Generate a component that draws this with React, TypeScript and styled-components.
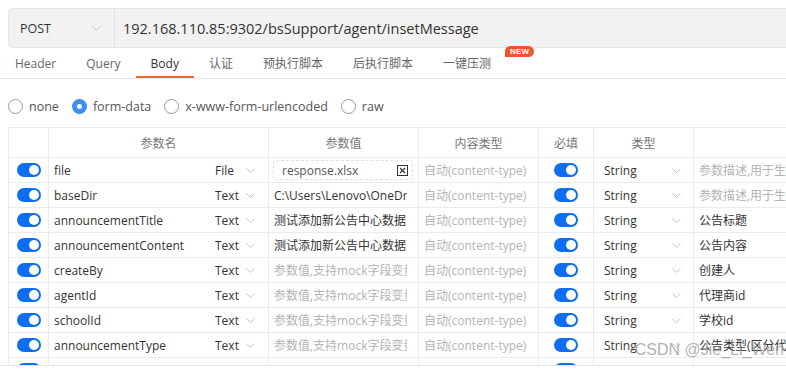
import React from 'react';
import styled, { createGlobalStyle } from 'styled-components';

const FONT = `"Open Sans", "Noto Sans CJK SC", sans-serif`;

const Global = createGlobalStyle`
  html, body { margin: 0; padding: 0; background: #fff; }
  body { font-family: ${FONT}; overflow: hidden; }
  * { box-sizing: border-box; }
`;

const Page = styled.div`
  position: relative;
  width: 786px;
  height: 370px;
  overflow: hidden;
  background: #fff;
  display: flex;
  flex-direction: column;
`;

const UrlBar = styled.div`
  margin: 8px -20px 0 8px;
  height: 40px;
  display: flex;
  align-items: center;
  background: #f2f2f2;
  border: 1px solid #e5e5e5;
  border-radius: 4px;
  flex-shrink: 0;
`;

const Method = styled.div`
  width: 106px;
  height: 100%;
  display: flex;
  align-items: center;
  justify-content: space-between;
  padding: 0 13px 0 11px;
  border-right: 1px solid #e2e2e2;
  font-size: 12.5px;
  color: #333;
`;

const UrlText = styled.div`
  padding-left: 8px;
  font-size: 14.5px;
  color: #333;
  white-space: nowrap;
`;

const Tabs = styled.div`
  height: 31px;
  display: flex;
  border-bottom: 1px solid #e8e8e8;
  flex-shrink: 0;
`;

const Tab = styled.div<{ $active?: boolean }>`
  position: relative;
  height: 30px;
  padding: 0 15px;
  display: flex;
  align-items: center;
  font-size: 12px;
  color: ${p => (p.$active ? '#333' : '#666')};
  white-space: nowrap;
  &::after {
    content: '';
    display: ${p => (p.$active ? 'block' : 'none')};
    position: absolute;
    left: 0;
    right: 0;
    bottom: 0;
    height: 2px;
    background: #f5653a;
  }
`;

const TabLabel = styled.span`
  position: relative;
`;

const NewBadge = styled.span`
  position: absolute;
  left: calc(100% + 14px);
  top: -8px;
  height: 11px;
  padding: 0 5px;
  border-radius: 6px 6px 6px 0;
  background: #f2552a;
  color: #fff;
  font-family: "Liberation Sans", sans-serif;
  font-size: 8px;
  font-weight: bold;
  line-height: 11px;
  letter-spacing: 0.2px;
`;

const RadioRow = styled.div`
  height: 48px;
  padding: 6px 0 0 8px;
  display: flex;
  align-items: center;
  gap: 13px;
  flex-shrink: 0;
`;

const RadioItem = styled.label`
  display: flex;
  align-items: center;
  gap: 6px;
  font-size: 12.5px;
  color: #555;
`;

const RadioCircle = styled.span<{ $checked?: boolean }>`
  width: 15px;
  height: 15px;
  border-radius: 50%;
  border: ${p => (p.$checked ? '5px solid #3d8ef5' : '1px solid #9a9a9a')};
  background: #fff;
`;

const Panel = styled.div`
  height: 239px;
  padding-left: 8px;
  border-bottom: 1px solid #e6e6e6;
  overflow: hidden;
  flex-shrink: 0;
`;

const Table = styled.div`
  border-left: 1px solid #ebebeb;
  border-top: 1px solid #ebebeb;
  width: 1000px;
`;

const COLS = '40px 220px 150px 120px 55px 100px 315px';

const Row = styled.div<{ $head?: boolean }>`
  display: grid;
  grid-template-columns: ${COLS};
  height: ${p => (p.$head ? '30px' : '25px')};
`;

const Cell = styled.div<{ $center?: boolean; $pad?: number }>`
  border-right: 1px solid #ebebeb;
  border-bottom: 1px solid #ebebeb;
  display: flex;
  align-items: center;
  justify-content: ${p => (p.$center ? 'center' : 'flex-start')};
  padding-left: ${p => (p.$pad ?? 0)}px;
  font-size: 12px;
  color: #333;
  white-space: nowrap;
  overflow: hidden;
`;

const HeadCell = styled(Cell)`
  justify-content: center;
  color: #777;
`;

const Name = styled.span`
  flex: 1;
  overflow: hidden;
`;

const Select = styled.div<{ $w: number; $pr: number }>`
  width: ${p => p.$w}px;
  height: 100%;
  display: flex;
  align-items: center;
  justify-content: space-between;
  padding-right: ${p => p.$pr}px;
  color: #333;
  flex-shrink: 0;
`;

const FlexFill = styled.div`
  flex: 1;
  height: 100%;
  display: flex;
  align-items: center;
  justify-content: space-between;
  padding-right: 12px;
`;

const ValueText = styled.span<{ $muted?: boolean }>`
  display: block;
  width: 133px;
  overflow: hidden;
  color: ${p => (p.$muted ? '#b3b3b3' : '#333')};
`;

const Muted = styled.span`
  color: #b3b3b3;
`;

const FileBox = styled.div`
  width: 140px;
  height: 20px;
  margin-left: -1px;
  border: 1px dashed #e0e0e0;
  border-radius: 3px;
  display: flex;
  align-items: center;
  justify-content: space-between;
  padding: 0 4px 0 8px;
  color: #555;
`;

const CloseBox = styled.span`
  width: 11px;
  height: 11px;
  border: 1px solid #333;
  display: flex;
  align-items: center;
  justify-content: center;
`;

const Toggle = styled.span`
  width: 24px;
  height: 14px;
  border-radius: 7px;
  background: #0d6ef2;
  position: relative;
  &::after {
    content: '';
    position: absolute;
    right: 2px;
    top: 2px;
    width: 10px;
    height: 10px;
    border-radius: 50%;
    background: #fff;
  }
`;

const Watermark = styled.div`
  position: absolute;
  right: 2px;
  top: 341px;
  font-family: "Liberation Sans", "Noto Sans CJK SC", sans-serif;
  font-size: 16px;
  color: rgba(150, 150, 150, 0.75);
  white-space: nowrap;
`;

const Chevron = () => (
  <svg width="9" height="5" viewBox="0 0 9 5" fill="none">
    <path d="M0.5 0.5 L4.5 4.5 L8.5 0.5" stroke="#c4c4c4" strokeWidth="1" />
  </svg>
);

const XIcon = () => (
  <svg width="7" height="7" viewBox="0 0 7 7">
    <path d="M1 1 L6 6 M6 1 L1 6" stroke="#333" strokeWidth="1.1" />
  </svg>
);

type Param = {
  name: string;
  kind: 'File' | 'Text';
  value?: string;
  file?: string;
  desc?: string;
  partial?: boolean;
};

const PARAMS: Param[] = [
  { name: 'file', kind: 'File', file: 'response.xlsx' },
  { name: 'baseDir', kind: 'Text', value: 'C:\\Users\\Lenovo\\OneDrive\\桌面' },
  { name: 'announcementTitle', kind: 'Text', value: '测试添加新公告中心数据', desc: '公告标题' },
  { name: 'announcementContent', kind: 'Text', value: '测试添加新公告中心数据', desc: '公告内容' },
  { name: 'createBy', kind: 'Text', desc: '创建人' },
  { name: 'agentId', kind: 'Text', desc: '代理商id' },
  { name: 'schoolId', kind: 'Text', desc: '学校id' },
  { name: 'announcementType', kind: 'Text', desc: '公告类型(区分代理商和学校)' },
  { name: '', kind: 'Text', partial: true },
];

const TABS = ['Header', 'Query', 'Body', '认证', '预执行脚本', '后执行脚本', '一键压测'];
const RADIOS = ['none', 'form-data', 'x-www-form-urlencoded', 'raw'];

export default function App() {
  return (
    <Page>
      <Global />
      <UrlBar>
        <Method>
          POST
          <Chevron />
        </Method>
        <UrlText>192.168.110.85:9302/bsSupport/agent/insetMessage</UrlText>
      </UrlBar>
      <Tabs>
        {TABS.map(t => (
          <Tab key={t} $active={t === 'Body'}>
            <TabLabel>
              {t}
              {t === '一键压测' && <NewBadge>NEW</NewBadge>}
            </TabLabel>
          </Tab>
        ))}
      </Tabs>
      <RadioRow>
        {RADIOS.map(r => (
          <RadioItem key={r}>
            <RadioCircle $checked={r === 'form-data'} />
            {r}
          </RadioItem>
        ))}
      </RadioRow>
      <Panel>
        <Table>
          <Row $head>
            <HeadCell />
            <HeadCell>参数名</HeadCell>
            <HeadCell>参数值</HeadCell>
            <HeadCell>内容类型</HeadCell>
            <HeadCell>必填</HeadCell>
            <HeadCell>类型</HeadCell>
            <HeadCell />
          </Row>
          {PARAMS.map((p, i) =>
            p.partial ? (
              <Row key={i}>
                <Cell $center>
                  <Toggle />
                </Cell>
                <Cell />
                <Cell />
                <Cell />
                <Cell $center>
                  <Toggle />
                </Cell>
                <Cell />
                <Cell />
              </Row>
            ) : (
              <Row key={i}>
                <Cell $center>
                  <Toggle />
                </Cell>
                <Cell $pad={5}>
                  <Name>{p.name}</Name>
                  <Select $w={53} $pr={13}>
                    {p.kind}
                    <Chevron />
                  </Select>
                </Cell>
                <Cell $pad={5}>
                  {p.file ? (
                    <FileBox>
                      {p.file}
                      <CloseBox>
                        <XIcon />
                      </CloseBox>
                    </FileBox>
                  ) : p.value ? (
                    <ValueText>{p.value}</ValueText>
                  ) : (
                    <ValueText $muted>参数值,支持mock字段变量</ValueText>
                  )}
                </Cell>
                <Cell $pad={5}>
                  <Muted>自动(content-type)</Muted>
                </Cell>
                <Cell $center>
                  <Toggle />
                </Cell>
                <Cell $pad={10}>
                  <FlexFill>
                    String
                    <Chevron />
                  </FlexFill>
                </Cell>
                <Cell $pad={5}>
                  {p.desc ? p.desc : <Muted>参数描述,用于生成文档</Muted>}
                </Cell>
              </Row>
            )
          )}
        </Table>
      </Panel>
      <Watermark>CSDN @Jie_Li_Wen</Watermark>
    </Page>
  );
}
